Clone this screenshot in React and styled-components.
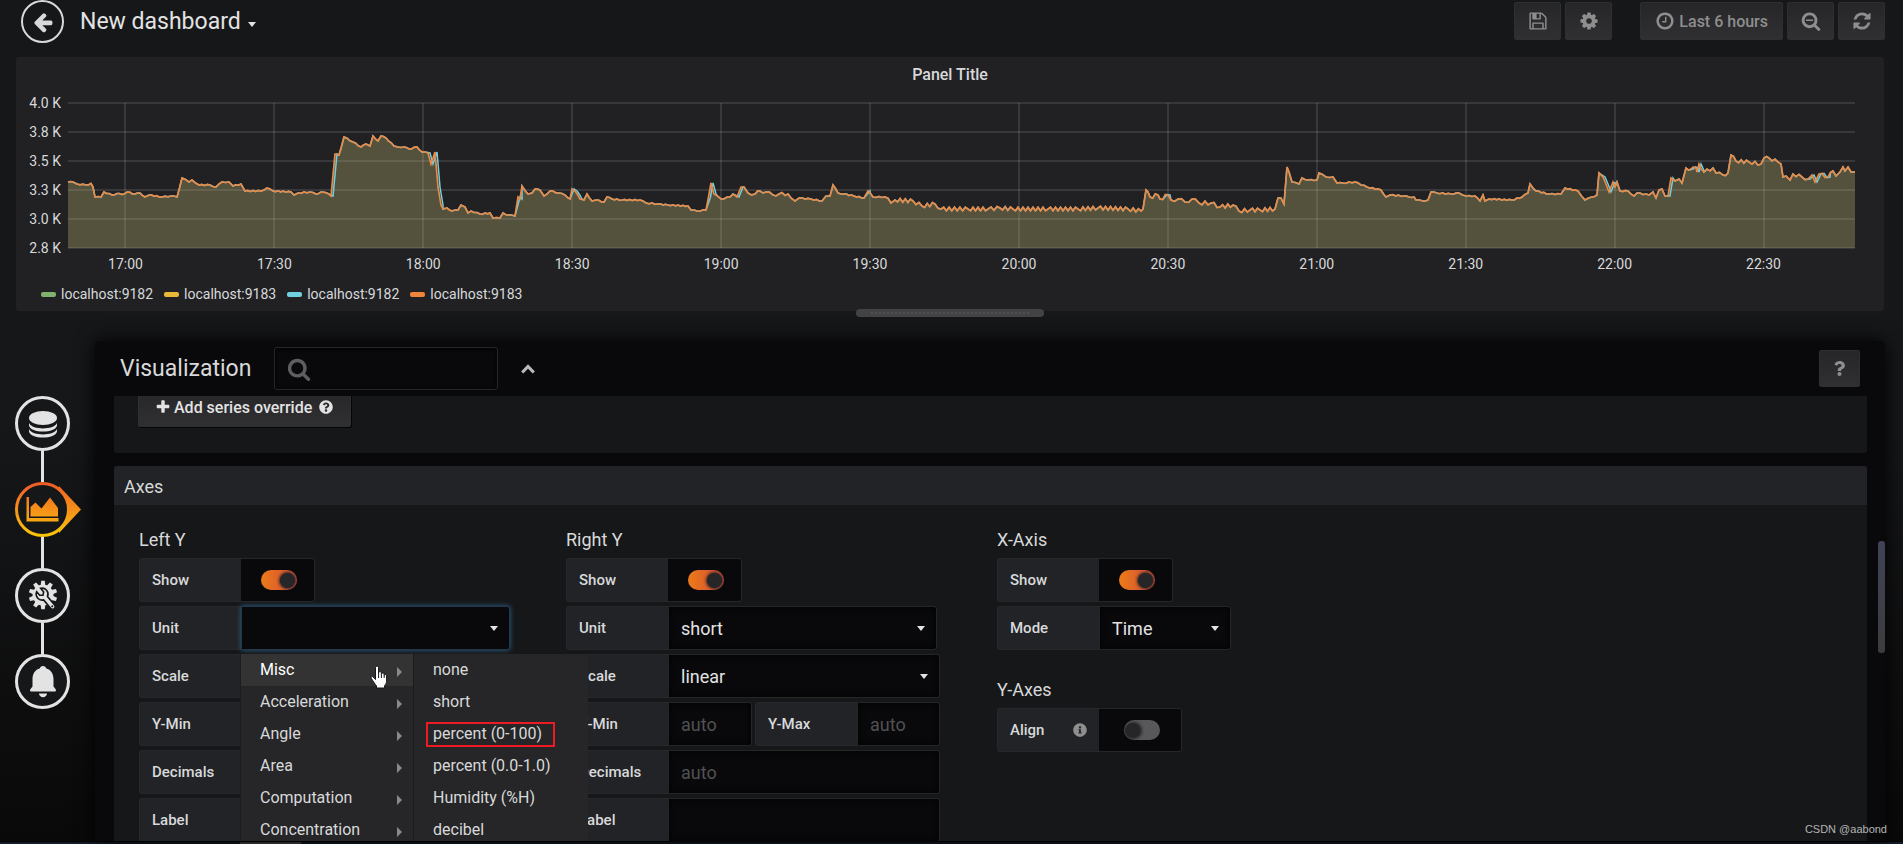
import React from 'react';
import styled, { createGlobalStyle, css } from 'styled-components';
import { FaQuestion, FaQuestionCircle, FaInfoCircle } from 'react-icons/fa';

const GlobalStyle = createGlobalStyle`
  *, *::before, *::after { box-sizing: border-box; }
  html, body { margin: 0; padding: 0; background: #161719; }
  body, button, input, select {
    font-family: Roboto, "Liberation Sans", sans-serif;
    color: #d8d9da;
  }
  h1, h2, h3, h4, ul, figure { margin: 0; padding: 0; font-weight: 400; }
  ul { list-style: none; }
  button { cursor: pointer; }
`;

/* ---------- icons ---------- */

const glyphs = {
  back: 'M1664 896v128q0 53-32.5 90.5t-84.5 37.5h-704l293 294q38 36 38 90t-38 90l-75 76q-37 37-90 37-52 0-91-37l-651-652q-37-37-37-90 0-52 37-91l651-650q38-38 91-38 52 0 90 38l75 74q38 38 38 91t-38 91l-293 293h704q52 0 84.5 37.5t32.5 90.5z',
  save: 'M512 1536h768v-384h-768v384zm896 0h128v-896q0-14-10-38.5t-20-34.5l-281-281q-10-10-34-20t-39-10v416q0 40-28 68t-68 28h-576q-40 0-68-28t-28-68v-416h-128v1280h128v-416q0-40 28-68t68-28h832q40 0 68 28t28 68v416zm-384-928v-320q0-13-9.5-22.5t-22.5-9.5h-192q-13 0-22.5 9.5t-9.5 22.5v320q0 13 9.5 22.5t22.5 9.5h192q13 0 22.5-9.5t9.5-22.5zm640 32v928q0 40-28 68t-68 28h-1344q-40 0-68-28t-28-68v-1344q0-40 28-68t68-28h928q40 0 88 20t76 48l280 280q28 28 48 76t20 88z',
  cog: 'M1152 896q0-106-75-181t-181-75-181 75-75 181 75 181 181 75 181-75 75-181zm512-109v222q0 12-8 23t-20 13l-185 28q-19 54-39 91 35 50 107 138 10 12 10 25t-9 23q-27 37-99 108t-94 71q-12 0-26-9l-138-108q-44 23-91 38-16 136-29 186-7 28-36 28h-222q-14 0-24.5-8.5t-11.5-21.5l-28-184q-49-16-90-37l-141 107q-10 9-25 9-14 0-25-11-126-114-165-168-7-10-7-23 0-12 8-23 15-21 51-66.5t54-70.5q-27-50-41-99l-183-27q-13-2-21-12.5t-8-23.5v-222q0-12 8-23t19-13l186-28q14-46 39-92-40-57-107-138-10-12-10-24 0-10 9-23 26-36 98.5-107.5t94.5-71.5q13 0 26 10l138 107q44-23 91-38 16-136 29-186 7-28 36-28h222q14 0 24.5 8.5t11.5 21.5l28 184q49 16 90 37l142-107q9-9 24-9 13 0 25 10 129 119 165 170 7 8 7 22 0 12-8 23-15 21-51 66.5t-54 70.5q26 50 41 98l183 28q13 2 21 12.5t8 23.5z',
  clock: 'M1024 544v448q0 14-9 23t-23 9h-320q-14 0-23-9t-9-23v-64q0-14 9-23t23-9h224v-352q0-14 9-23t23-9h64q14 0 23 9t9 23zm416 352q0-148-73-273t-198-198-273-73-273 73-198 198-73 273 73 273 198 198 273 73 273-73 198-198 73-273zm224 0q0 209-103 385.5t-279.5 279.5-385.5 103-385.5-103-279.5-279.5-103-385.5 103-385.5 279.5-279.5 385.5-103 385.5 103 279.5 279.5 103 385.5z',
  zoomOut: 'M1088 800v64q0 13-9.5 22.5t-22.5 9.5h-576q-13 0-22.5-9.5t-9.5-22.5v-64q0-13 9.5-22.5t22.5-9.5h576q13 0 22.5 9.5t9.5 22.5zm128 32q0-185-131.5-316.5t-316.5-131.5-316.5 131.5-131.5 316.5 131.5 316.5 316.5 131.5 316.5-131.5 131.5-316.5zm512 832q0 53-37.5 90.5t-90.5 37.5q-54 0-90-38l-343-342q-179 124-399 124-143 0-273.5-55.5t-225-150-150-225-55.5-273.5 55.5-273.5 150-225 225-150 273.5-55.5 273.5 55.5 225 150 150 225 55.5 273.5q0 220-124 399l343 343q37 37 37 90z',
  search: 'M1216 832q0-185-131.5-316.5t-316.5-131.5-316.5 131.5-131.5 316.5 131.5 316.5 316.5 131.5 316.5-131.5 131.5-316.5zm512 832q0 53-37.5 90.5t-90.5 37.5q-54 0-90-38l-343-342q-179 124-399 124-143 0-273.5-55.5t-225-150-150-225-55.5-273.5 55.5-273.5 150-225 225-150 273.5-55.5 273.5 55.5 225 150 150 225 55.5 273.5q0 220-124 399l343 343q37 37 37 90z',
  refresh: 'M1639 1056q0 5-1 7-64 268-268 434.5t-478 166.5q-146 0-282.5-55t-243.5-157l-129 129q-19 19-45 19t-45-19-19-45v-448q0-26 19-45t45-19h448q26 0 45 19t19 45-19 45l-137 137q71 66 161 102t187 36q134 0 250-65t186-179q11-17 53-117 8-23 30-23h192q13 0 22.5 9.5t9.5 22.5zm25-800v448q0 26-19 45t-45 19h-448q-26 0-45-19t-19-45 19-45l138-138q-148-137-349-137-134 0-250 65t-186 179q-11 17-53 117-8 23-30 23h-199q-13 0-22.5-9.5t-9.5-22.5v-7q65-268 270-434.5t480-166.5q146 0 284 55.5t245 156.5l130-129q19-19 45-19t45 19 19 45z',
  plus: 'M1600 736v192q0 40-28 68t-68 28h-416v416q0 40-28 68t-68 28h-192q-40 0-68-28t-28-68v-416h-416q-40 0-68-28t-28-68v-192q0-40 28-68t68-28h416v-416q0-40 28-68t68-28h192q40 0 68 28t28 68v416h416q40 0 68 28t28 68z',
};

const Glyph = ({ name, size = 20 }) => (
  <svg width={size} height={size} viewBox="0 0 1792 1792" fill="currentColor" aria-hidden="true">
    <path d={glyphs[name]} />
  </svg>
);

const DatabaseIcon = () => (
  <svg width="28" height="28" viewBox="0 0 28 28" fill="#e3e3e3" aria-hidden="true">
    <ellipse cx="14" cy="8" rx="14" ry="7" />
    <path d="M0 13c2 4 8 5.400 14 5.400S26 17 28 13v2.500c-1 4-7 6-14 6S1 19.500 0 15.500z" />
    <path d="M0 19c2 4 8 5.400 14 5.400S26 23 28 19v2.500c-1 4-7 6-14 6S1 25.500 0 21.500z" />
  </svg>
);

const GraphIcon = () => (
  <svg width="68" height="56" viewBox="0 0 68 56" aria-hidden="true">
    <defs>
      <linearGradient id="flame" gradientUnits="userSpaceOnUse" x1="0" y1="0" x2="0" y2="56">
        <stop offset="0" stopColor="#f05a28" />
        <stop offset="1" stopColor="#fbca0a" />
      </linearGradient>
    </defs>
    <path d="M44 4L66 27.500 44 51z" fill="url(#flame)" />
    <circle cx="27.500" cy="27.500" r="26" fill="#161719" stroke="url(#flame)" strokeWidth="3" />
    <g fill="url(#flame)">
      <path d="M11.500 15h2.500v21h29.500v3.500h-32z" />
      <path d="M15.500 34.500V25l5-4.500 6 6 8.500-11 8 10.500v8.500z" />
    </g>
  </svg>
);

const teeth = [0, 36, 72, 108, 144, 180, 216, 252, 288, 324];
const SettingsIcon = () => (
  <svg width="30" height="32" viewBox="-15 -15 30 32" aria-hidden="true">
    <g fill="#e3e3e3">
      {teeth.map((a) => <path key={a} d="M-2.400 -9L-1.800 -14.200H1.800L2.400 -9z" transform={`rotate(${a})`} />)}
      <circle r="10.500" />
    </g>
    <g transform="translate(-1 -1) rotate(-40)">
      <path
        d="M-2.600 5.500L-2.600 16.500a2.600 2.600 0 0 0 5.200 0L2.600 5.500A6 6 0 0 0 2.600 -5.200V-0.500L0 1.500 -2.600 -0.500V-5.200A6 6 0 0 0 -2.600 5.500z"
        fill="#e3e3e3" stroke="#161719" strokeWidth="1.600"
      />
      <circle cx="0" cy="16" r="1" fill="#161719" />
    </g>
  </svg>
);

const BellIcon = () => (
  <svg width="26" height="32" viewBox="0 0 26 32" fill="#e3e3e3" aria-hidden="true">
    <path d="M13 0c1.800 0 2.800 1 3 2.200C21 3.600 23.500 8 23.500 13v7.500l2 2.500c1 1.300.3 2.500-1 2.500h-23C.2 25.500-.5 24.300.5 23l2-2.500V13C2.500 8 5 3.600 10 2.200 10.200 1 11.200 0 13 0z" />
    <path d="M9 27.500h8c0 2-1.800 3.700-4 3.700s-4-1.700-4-3.700z" />
  </svg>
);

const ChevronIcon = () => (
  <svg width="16" height="12" viewBox="0 0 16 12" aria-hidden="true">
    <path d="M2.200 9.500L8 3.500l5.800 6" fill="none" stroke="#b9b9bb" strokeWidth="3.200" />
  </svg>
);

const HandIcon = () => (
  <svg width="18" height="24" viewBox="0 0 18 24" aria-hidden="true">
    <path
      d="M5.500 2.500a1.500 1.500 0 0 1 3 0V9l.3-1.700a1.400 1.400 0 0 1 2.500.2l.1 2 .4-1a1.300 1.300 0 0 1 2.300.4l.1 1.600.4-.6a1.200 1.200 0 0 1 2 .8V16c0 2-1 3.500-2 4.500V23H6.500v-2C5 19 3.500 17 1.200 13.200c-.5-1.500 1-2.200 2-1.200l2.300 2.500z"
      fill="#fff" stroke="#15151c" strokeWidth="1"
    />
    <path d="M8.600 9v4M11.400 9.500V13M14.200 10.500V13" stroke="#15151c" strokeWidth="1" />
  </svg>
);

/* ---------- page frame ---------- */

const Page = styled.div`
  position: relative;
  display: flex;
  flex-direction: column;
  height: 100vh;
  min-height: 600px;
  overflow: hidden;
  background: linear-gradient(180deg, #161719 0, #161719 50%, #090909 100%);
`;

const Header = styled.header`
  flex: none;
  display: flex;
  align-items: flex-start;
  justify-content: space-between;
  height: 57px;
  padding: 0 18px 0 21px;
`;

const Crumb = styled.div`
  display: flex;
  align-items: center;
  height: 43px;
`;

const BackButton = styled.button`
  display: grid;
  place-items: center;
  width: 43px;
  height: 43px;
  margin-right: 16px;
  padding: 0;
  border: 2px solid #d8d9da;
  border-radius: 50%;
  background: none;
  color: #d8d9da;
`;

const Caret = css`
  content: "";
  width: 0;
  height: 0;
  border: 4px solid transparent;
  border-top: 5px solid #e3e3e3;
  border-bottom: 0;
`;

const DashboardTitle = styled.a`
  display: flex;
  align-items: center;
  gap: 7px;
  font-size: 23px;
  line-height: 42px;
  color: #e3e3e3;
  text-decoration: none;
  &::after { ${Caret} margin-top: 6px; }
`;

const Tools = styled.div`
  display: flex;
  gap: 4px;
  padding-top: 2px;
`;

const ToolButton = styled.button`
  display: flex;
  align-items: center;
  justify-content: center;
  gap: 4px;
  min-width: 47px;
  height: 38px;
  padding: 0 ${(p) => (p.$wide ? 14 : 0)}px;
  margin-left: ${(p) => (p.$apart ? 24 : 0)}px;
  border: 1px solid #2f2f32;
  border-radius: 2px;
  background: linear-gradient(180deg, #262628, #303033);
  color: #8e8e8e;
  font-size: 16px;
  font-weight: 500;
`;

/* ---------- graph panel ---------- */

const Panel = styled.section`
  position: relative;
  flex: none;
  display: flex;
  flex-direction: column;
  margin: 0 19px 30px 16px;
  border-radius: 3px;
  background: #212124;
`;

const PanelTitle = styled.h2`
  height: 46px;
  font-size: 16px;
  font-weight: 500;
  line-height: 36px;
  text-align: center;
`;

const Plot = styled.figure`
  display: grid;
  grid-template-columns: 52px 1fr;
  padding-right: 29px;
`;

const YLabels = styled.div`
  display: flex;
  flex-direction: column;
  justify-content: space-between;
  margin: -10px 0;
  padding-right: 7px;
  font-size: 14px;
  line-height: 20px;
  text-align: right;
`;

const Canvas = styled.svg`
  display: block;
  width: 100%;
  height: 145px;
  overflow: visible;
`;

const XLabels = styled.div`
  grid-column: 2;
  display: grid;
  grid-template-columns: repeat(12, 1fr);
  margin: 6px 17px 0 -17px;
  font-size: 14px;
  line-height: 20px;
  text-align: center;
`;

const Legend = styled.ul`
  display: flex;
  gap: 11px;
  padding: 10px 0 7px 25px;
  font-size: 14px;
  line-height: 20px;
`;

const LegendItem = styled.li`
  display: flex;
  align-items: center;
  gap: 5px;
  &::before {
    content: "";
    width: 15px;
    height: 5px;
    border-radius: 2px;
    background: ${(p) => p.$color};
  }
`;

const ResizeHandle = styled.div`
  position: absolute;
  left: 50%;
  bottom: -6px;
  z-index: 2;
  display: grid;
  place-items: center;
  width: 188px;
  height: 8px;
  margin-left: -94px;
  border-radius: 4px;
  background: #434345;
  &::after {
    content: "";
    width: 158px;
    border-top: 2px dotted #4f4f51;
  }
`;

/* Key points of the series as [x, y] in the 1787 x 145 plot box. */
const samples = [
  [0,79],[5,79],[9,81],[18,82],[23,80.5],[25,84],[27,94],[33,94],[36,89],[44,92],[49,90.5],[54,91.5],[59,89],[67,91],[72,90],[77,94],[81,92],[94,94],[103,93],[109,94],[114,75],[121,79],[124,77],[131,82],[142,82],[148,84],[154,79],[161,79],[165,83],[173,81],[177,88],[193,88],[199,85],[205,88],[223,89],[226,92],[230,90],[242,89],[248,91],[253,89],[260,90.5],[263,93],[267,51],[271,52],[276,34],[285,39],[293,44],[298,41],[302,43],[305,33],[310,38],[313,33],[318,35],[326,43],[330,44],[336,44],[341,46],[349,44],[354,49],[360,50],[363,61],[367,49],[370,84],[373,102],[375,106],[379,105],[384,108],[390,107],[393,102],[397,104],[400,110],[403,108],[412,111],[422,110],[425,115],[432,115],[435,110],[440,112],[447,113],[450,94],[452,96],[454,83],[460,91],[464,90],[467,86],[472,87],[476,93],[482,88],[491,90],[497,92],[502,96],[504,86],[507,88],[512,96],[516,97],[519,91],[524,98],[528,97],[536,99],[539,94],[544,96],[554,97],[572,97],[578,100],[590,101],[600,102],[620,103],[623,107],[629,108],[638,107],[643,80],[646,91],[653,96],[662,94],[665,91],[669,94],[673,84],[676,84],[680,90],[687,91],[692,88],[698,89],[705,92],[711,91],[720,91],[723,95],[727,98],[731,95],[743,96],[754,98],[758,93],[762,93],[765,82],[770,90],[776,91],[786,93],[796,95],[800,88],[805,94],[817,94],[823,100],[827,97],[845,98],[854,103],[867,101],[873,106],[900,106],[920,106],[932,105],[945,106],[980,106],[1010,106],[1030,105],[1060,106],[1073,108],[1075,106],[1078,87],[1080,89],[1082,94],[1090,92],[1092,96],[1100,92],[1103,97],[1110,96],[1117,99],[1124,96],[1131,100],[1143,100],[1152,104],[1165,102],[1171,108],[1182,107],[1192,107],[1207,106],[1210,95],
  [1213,95],[1216,101],[1219,64],[1221,69],[1224,79],[1231,81],[1234,75],[1240,77],[1249,77],[1251,70],[1258,74],[1265,74],[1269,80],[1275,80],[1287,79],[1299,84],[1313,87],[1318,94],[1322,92],[1336,93],[1341,94],[1346,94],[1348,97],[1355,98],[1360,97],[1363,89],[1369,90],[1383,91],[1391,90],[1398,93],[1407,93],[1412,98],[1415,92],[1417,98],[1421,96],[1444,97],[1454,94],[1460,90],[1462,81],[1468,88],[1481,91],[1493,91],[1497,85],[1510,88],[1517,97],[1524,94],[1529,92],[1531,70],[1535,74],[1541,89],[1545,79],[1547,84],[1549,79],[1552,88],[1560,88],[1566,93],[1569,90],[1581,92],[1585,89],[1588,95],[1591,87],[1594,86],[1597,93],[1600,93],[1603,75],[1607,78],[1611,76],[1614,80],[1618,65],[1623,66],[1628,65],[1629,69],[1631,61],[1636,69],[1645,65],[1648,70],[1655,72],[1660,70],[1663,52],
  [1668,58],[1681,59],[1693,61],[1696,55],[1701,55],[1710,59],[1713,61],[1715,74],[1718,73],[1722,77],[1725,71],[1734,74],[1740,76],[1744,72],[1747,79],[1751,71],[1760,74],[1765,68],[1768,73],[1772,69],[1775,64],[1777,68],[1780,64],[1783,69],[1787,69],
];

const rippleAt = (x) => {
  if (x > 815 && x < 1210) return 1.8;
  if (x > 1620) return 1.6;
  if (x > 670 && x < 720) return 1.4;
  return 0.5;
};

const withRipple = (points) => {
  const out = [];
  let sign = 1;
  points.forEach(([x, y], i) => {
    out.push([x, y]);
    const next = points[i + 1];
    if (!next) return;
    const steps = Math.floor((next[0] - x) / 2.5);
    for (let k = 1; k < steps; k += 1) {
      const t = k / steps;
      sign = -sign;
      const px = x + (next[0] - x) * t;
      out.push([px, y + (next[1] - y) * t + sign * rippleAt(px)]);
    }
  });
  return out;
};

const lagging = [[262, 268], [358, 373], [448, 453], [503, 514], [640, 648], [668, 675], [797, 801], [1095, 1100], [1535, 1545], [1598, 1606], [1622, 1634], [1740, 1762]];
const toPath = (points) => `M${points.map(([x, y]) => `${x.toFixed(1)} ${y.toFixed(1)}`).join('L')}`;
const front = withRipple(samples);
const back = front.map(([x, y]) => [lagging.some(([a, b]) => x >= a && x <= b) ? x + 2 : x, y]);
const linePath = toPath(front);
const backPath = toPath(back);
const areaPath = `${linePath}L1787 145L0 145Z`;

const rows = [0, 29, 58, 87, 116, 145];
const columns = Array.from({ length: 12 }, (_, i) => 57 + 149 * i);
const levels = ['4.0 K', '3.8 K', '3.5 K', '3.3 K', '3.0 K', '2.8 K'];
const times = ['17:00', '17:30', '18:00', '18:30', '19:00', '19:30', '20:00', '20:30', '21:00', '21:30', '22:00', '22:30'];
const series = [
  ['localhost:9182', '#7eb26d'],
  ['localhost:9183', '#eab839'],
  ['localhost:9182', '#6ed0e0'],
  ['localhost:9183', '#ef843c'],
];

const Graph = () => (
  <Panel>
    <PanelTitle>Panel Title</PanelTitle>
    <Plot>
      <YLabels>{levels.map((l) => <span key={l}>{l}</span>)}</YLabels>
      <Canvas viewBox="0 0 1787 145" preserveAspectRatio="none" role="img" aria-label="Time series">
        <path d={areaPath} fill="#54513c" />
        <g stroke="#c8c8c8" strokeOpacity="0.14" strokeWidth="2">
          {rows.map((y) => <path key={y} d={`M0 ${y}H1787`} vectorEffect="non-scaling-stroke" />)}
          {columns.map((x) => <path key={x} d={`M${x} 0V145`} vectorEffect="non-scaling-stroke" />)}
        </g>
        <path d={backPath} fill="none" stroke="#6ed0e0" strokeWidth="1.500" vectorEffect="non-scaling-stroke" />
        <path d={linePath} fill="none" stroke="#e88a48" strokeWidth="1.700" vectorEffect="non-scaling-stroke" />
      </Canvas>
      <XLabels>{times.map((t) => <span key={t}>{t}</span>)}</XLabels>
    </Plot>
    <Legend>
      {series.map(([name, color]) => <LegendItem key={color} $color={color}>{name}</LegendItem>)}
    </Legend>
    <ResizeHandle />
  </Panel>
);

/* ---------- editor ---------- */

const Editor = styled.div`
  flex: 1;
  min-height: 0;
  display: flex;
  padding-right: 18px;
`;

const Rail = styled.nav`
  flex: none;
  display: flex;
  flex-direction: column;
  align-items: flex-start;
  width: 95px;
  padding: 55px 0 0 15px;
`;

const RailButton = styled.button`
  position: relative;
  z-index: 1;
  display: grid;
  place-items: center;
  width: ${(p) => (p.$active ? 68 : 55)}px;
  height: 55px;
  padding: 0;
  border: ${(p) => (p.$active ? '0' : '3px solid #e3e3e3')};
  border-radius: ${(p) => (p.$active ? '0' : '50%')};
  background: ${(p) => (p.$active ? 'none' : '#161719')};
`;

const RailLink = styled.span`
  width: 3px;
  height: 31px;
  margin-left: 26px;
  background: #e3e3e3;
`;

const Main = styled.main`
  position: relative;
  flex: 1;
  min-width: 0;
  display: flex;
  flex-direction: column;
  border-radius: 4px 4px 0 0;
  background: #09090b;
  box-shadow: 0 0 20px #000;
`;

const Toolbar = styled.div`
  flex: none;
  display: flex;
  align-items: center;
  height: 55px;
  padding: 0 25px;
`;

const ToolbarTitle = styled.h1`
  font-size: 23px;
  line-height: 28px;
  margin-right: 23px;
`;

const SearchBox = styled.label`
  display: flex;
  align-items: center;
  gap: 10px;
  width: 224px;
  height: 43px;
  padding: 0 12px;
  margin-right: 22px;
  border: 1px solid #262628;
  border-radius: 3px;
  color: #5e5e60;
  box-shadow: inset 0 1px 4px #000;
  input {
    flex: 1;
    min-width: 0;
    border: 0;
    outline: 0;
    background: none;
    font-size: 18px;
  }
`;

const PlainButton = styled.button`
  display: grid;
  place-items: center;
  padding: 0;
  border: 0;
  background: none;
`;

const HelpButton = styled(ToolButton)`
  min-width: 41px;
  height: 37px;
  margin-left: auto;
`;

const ScrollArea = styled.div`
  flex: 1;
  min-height: 0;
  overflow: hidden;
  padding: 0 18px 0 19px;
`;

const Stack = styled.div`
  display: flex;
  flex-direction: column;
  gap: 13px;
  margin-top: -31px;
`;

const Card = styled.section`
  border-radius: 3px;
  background: #161719;
`;

const CardHeader = styled.h2`
  height: 39px;
  padding: 0 10px;
  border-radius: 3px 3px 0 0;
  background: #222326;
  font-size: 18px;
  line-height: 41px;
`;

const OverrideBody = styled.div`
  padding: 22px 24px 26px;
`;

const OverrideButton = styled.button`
  display: flex;
  align-items: center;
  gap: 3px;
  height: 40px;
  padding: 0 17px 0 16px;
  border: 1px solid #303033;
  border-radius: 2px;
  background: linear-gradient(180deg, #262628, #303033);
  box-shadow: 1px 1px 0 #050505;
  color: #e3e3e3;
  font-size: 16px;
  font-weight: 500;
  span { margin-right: 4px; }
`;

const AxesBody = styled.div`
  display: grid;
  grid-template-columns: 427px 431px 1fr;
  padding: 17px 25px 24px;
`;

const GroupTitle = styled.h3`
  height: 36px;
  margin-top: ${(p) => (p.$spaced ? 22 : 0)}px;
  font-size: 18px;
  line-height: 36px;
`;

const Fields = styled.div`
  display: flex;
  flex-direction: column;
  gap: 4px;
`;

const Row = styled.div`
  display: flex;
  gap: 3px;
`;

const Field = styled.div`
  position: relative;
  display: flex;
  width: ${(p) => (p.$width ? `${p.$width}px` : 'auto')};
`;

const Label = styled.label`
  flex: none;
  display: flex;
  align-items: center;
  justify-content: space-between;
  width: 102px;
  height: 44px;
  padding: 0 12px;
  border: 1px solid #27282b;
  border-right: 0;
  border-radius: 3px 0 0 3px;
  background: #222326;
  color: #d8d9da;
  font-size: 15px;
  font-weight: 500;
  svg { color: #8e8e8e; }
`;

const SwitchBox = styled.span`
  display: grid;
  place-items: center;
  width: ${(p) => (p.$wide ? 83 : 74)}px;
  height: 44px;
  border: 1px solid #262628;
  border-left: 0;
  border-radius: 0 3px 3px 0;
  background: #09090b;
`;

const Switch = styled.input`
  appearance: none;
  display: flex;
  align-items: center;
  width: 36px;
  height: 20px;
  margin: 0 0 0 3px;
  border-radius: 10px;
  background: #58585a;
  &::before {
    content: "";
    width: 15px;
    height: 15px;
    margin-left: 1px;
    border-radius: 50%;
    background: #262628;
    box-shadow: 1px 0 3px 1px #262628;
  }
  &:checked { background: linear-gradient(90deg, #eb7b18, #d44a3a); }
  &:checked::before {
    margin-left: 19px;
    box-shadow: 0 0 3px 1px #262628;
  }
`;

const control = css`
  width: 100%;
  height: 44px;
  padding: 0 12px;
  border: 1px solid #262628;
  border-radius: 0 3px 3px 0;
  outline: 0;
  background: #09090b;
  box-shadow: inset 0 0 6px #000;
  color: #e3e3e3;
  font-size: 18px;
`;

const SelectBox = styled.span`
  position: relative;
  flex: 1;
  display: flex;
  &::after {
    ${Caret}
    position: absolute;
    top: 20px;
    right: 12px;
  }
`;

const Select = styled.select`
  appearance: none;
  ${control}
  ${(p) => p.$focused && 'border-color: #22384a; box-shadow: 0 0 5px #2f648a;'}
`;

const TextInput = styled.input`
  flex: 1;
  min-width: 0;
  ${control}
  &::placeholder { color: #515153; opacity: 1; }
`;

/* ---------- unit menu ---------- */

const MenuLayer = styled.div`
  position: absolute;
  top: 48px;
  left: 101px;
  z-index: 5;
  display: flex;
`;

const Menu = styled.ul`
  width: ${(p) => p.$width}px;
  background: #262628;
  border-left: 1px solid #1c1c1e;
  border-radius: 0 4px 0 0;
`;

const MenuItem = styled.button`
  position: relative;
  display: flex;
  align-items: center;
  justify-content: space-between;
  width: 100%;
  height: 32px;
  padding: 0 11px 0 19px;
  border: 0;
  background: ${(p) => (p.$active ? '#333333' : 'none')};
  color: ${(p) => (p.$active ? '#ffffff' : '#d8d9da')};
  font-size: 16px;
  line-height: 32px;
  text-align: left;
  ${(p) => p.$parent && css`
    &::after {
      content: "";
      border: 5px solid transparent;
      border-left-color: #8b8886;
      border-right: 0;
      margin-top: 4px;
    }
  `}
  ${(p) => p.$marked && css`
    &::before {
      content: "";
      position: absolute;
      top: 4px;
      left: 12px;
      width: 129px;
      height: 25px;
      border: 2px solid #ed1c24;
    }
  `}
`;

const Pointer = styled.span`
  position: absolute;
  top: 11px;
  left: 130px;
  z-index: 1;
  pointer-events: none;
`;

const categories = ['Misc', 'Acceleration', 'Angle', 'Area', 'Computation', 'Concentration'];
const miscUnits = ['none', 'short', 'percent (0-100)', 'percent (0.0-1.0)', 'Humidity (%H)', 'decibel'];

const UnitMenu = () => (
  <MenuLayer>
    <Menu $width={173}>
      {categories.map((c, i) => (
        <li key={c}><MenuItem type="button" $parent $active={i === 0}>{c}</MenuItem></li>
      ))}
    </Menu>
    <Menu $width={175}>
      {miscUnits.map((u, i) => (
        <li key={u}><MenuItem type="button" $marked={i === 2}>{u}</MenuItem></li>
      ))}
    </Menu>
    <Pointer><HandIcon /></Pointer>
  </MenuLayer>
);

/* ---------- fields ---------- */

const SwitchField = ({ id, label, on, wide, info }) => (
  <Field>
    <Label htmlFor={id}>{label}{info && <FaInfoCircle size={14} />}</Label>
    <SwitchBox $wide={wide}><Switch id={id} type="checkbox" defaultChecked={on} /></SwitchBox>
  </Field>
);

const SelectField = ({ id, label, value, width, focused, children }) => (
  <Field $width={width}>
    <Label htmlFor={id}>{label}</Label>
    <SelectBox>
      <Select id={id} $focused={focused} defaultValue={value}><option value={value}>{value}</option></Select>
    </SelectBox>
    {children}
  </Field>
);

const TextField = ({ id, label, placeholder, width }) => (
  <Field $width={width}>
    <Label htmlFor={id}>{label}</Label>
    <TextInput id={id} type="text" placeholder={placeholder} />
  </Field>
);

const AxisColumn = ({ id, title, unit, unitFocused, children }) => (
  <div>
    <GroupTitle>{title}</GroupTitle>
    <Fields>
      <SwitchField id={`${id}-show`} label="Show" on />
      <SelectField id={`${id}-unit`} label="Unit" value={unit} width={371} focused={unitFocused}>{children}</SelectField>
      <SelectField id={`${id}-scale`} label="Scale" value="linear" width={374} />
      <Row>
        <TextField id={`${id}-min`} label="Y-Min" placeholder="auto" width={186} />
        <TextField id={`${id}-max`} label="Y-Max" placeholder="auto" width={185} />
      </Row>
      <TextField id={`${id}-decimals`} label="Decimals" placeholder="auto" width={374} />
      <TextField id={`${id}-label`} label="Label" width={374} />
    </Fields>
  </div>
);

const ScrollThumb = styled.div`
  position: absolute;
  top: 200px;
  right: 0;
  width: 7px;
  height: 112px;
  border-radius: 3px;
  background: linear-gradient(180deg, #404357, #3c3c3e);
`;

const BottomEdge = styled.div`
  flex: none;
  height: 3px;
  padding-left: 240px;
  border-top: 1px solid #050506;
  background: #131a26;
  &::before {
    content: "";
    display: block;
    width: 61px;
    height: 2px;
    background: #48484b;
  }
`;

const Watermark = styled.small`
  position: absolute;
  right: 16px;
  bottom: 7px;
  z-index: 6;
  font-family: "Liberation Sans", Arial, sans-serif;
  font-size: 11px;
  line-height: 16px;
  color: #b4b4b4;
`;

export default function App() {
  return (
    <Page>
      <GlobalStyle />
      <Header>
        <Crumb>
          <BackButton type="button" aria-label="Back"><Glyph name="back" size={22} /></BackButton>
          <DashboardTitle href="#dashboard">New dashboard</DashboardTitle>
        </Crumb>
        <Tools>
          <ToolButton type="button" aria-label="Save"><Glyph name="save" /></ToolButton>
          <ToolButton type="button" aria-label="Settings"><Glyph name="cog" /></ToolButton>
          <ToolButton type="button" $wide $apart><Glyph name="clock" />Last 6 hours</ToolButton>
          <ToolButton type="button" aria-label="Zoom out"><Glyph name="zoomOut" /></ToolButton>
          <ToolButton type="button" aria-label="Refresh"><Glyph name="refresh" /></ToolButton>
        </Tools>
      </Header>
      <Graph />
      <Editor>
        <Rail>
          <RailButton type="button" aria-label="Queries"><DatabaseIcon /></RailButton>
          <RailLink />
          <RailButton type="button" aria-label="Visualization" $active><GraphIcon /></RailButton>
          <RailLink />
          <RailButton type="button" aria-label="General"><SettingsIcon /></RailButton>
          <RailLink />
          <RailButton type="button" aria-label="Alert"><BellIcon /></RailButton>
        </Rail>
        <Main>
          <Toolbar>
            <ToolbarTitle>Visualization</ToolbarTitle>
            <SearchBox>
              <Glyph name="search" size={24} />
              <input type="search" aria-label="Search visualizations" />
            </SearchBox>
            <PlainButton type="button" aria-label="Collapse"><ChevronIcon /></PlainButton>
            <HelpButton type="button" aria-label="Help"><FaQuestion size={15} /></HelpButton>
          </Toolbar>
          <ScrollArea>
            <Stack>
              <Card>
                <OverrideBody>
                  <OverrideButton type="button">
                    <Glyph name="plus" size={16} />
                    <span>Add series override</span>
                    <FaQuestionCircle size={14} />
                  </OverrideButton>
                </OverrideBody>
              </Card>
              <Card>
                <CardHeader>Axes</CardHeader>
                <AxesBody>
                  <AxisColumn id="left" title="Left Y" unit="" unitFocused><UnitMenu /></AxisColumn>
                  <AxisColumn id="right" title="Right Y" unit="short" />
                  <div>
                    <GroupTitle>X-Axis</GroupTitle>
                    <Fields>
                      <SwitchField id="x-show" label="Show" on />
                      <SelectField id="x-mode" label="Mode" value="Time" width={234} />
                    </Fields>
                    <GroupTitle $spaced>Y-Axes</GroupTitle>
                    <SwitchField id="y-align" label="Align" wide info />
                  </div>
                </AxesBody>
              </Card>
            </Stack>
          </ScrollArea>
          <ScrollThumb />
        </Main>
      </Editor>
      <BottomEdge />
      <Watermark>CSDN @aabond</Watermark>
    </Page>
  );
}
